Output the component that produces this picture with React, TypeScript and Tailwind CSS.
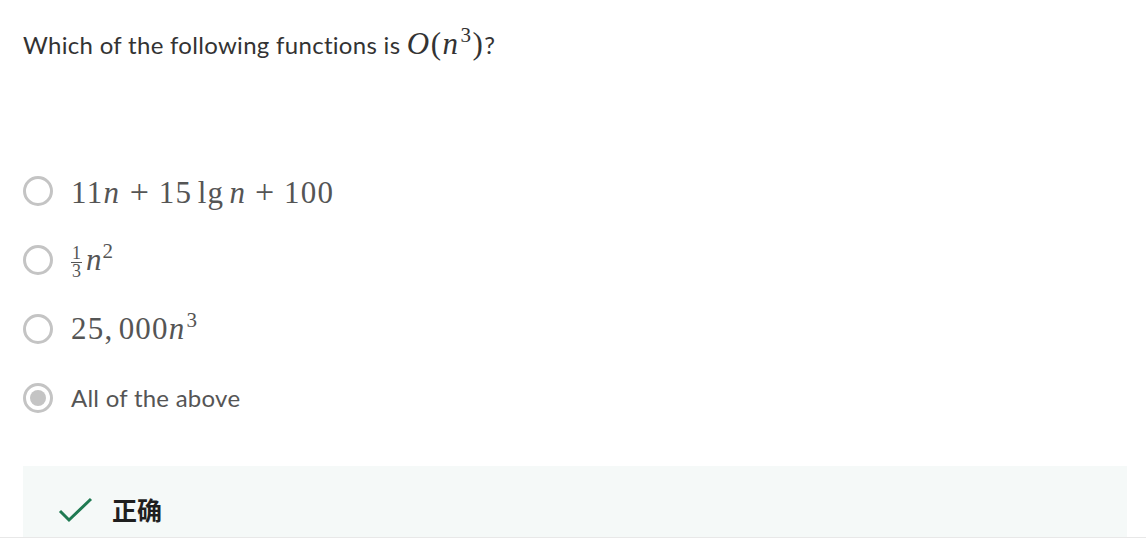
import React from "react";

const serif = "font-['Liberation_Serif','DejaVu_Serif',serif]";

function Radio({ selected }: { selected?: boolean }) {
  return (
    <div className="w-[30px] h-[30px] rounded-full border-[3px] border-[#c4c4c4] flex items-center justify-center shrink-0">
      {selected && <div className="w-[16px] h-[16px] rounded-full bg-[#c4c4c4]" />}
    </div>
  );
}

function Option({ selected, children }: { selected?: boolean; children: React.ReactNode }) {
  return (
    <div className="flex items-center gap-[18px] h-[40px]">
      <Radio selected={selected} />
      <div className="text-[#555]">{children}</div>
    </div>
  );
}

function Plus() {
  return <span className="mx-[0.25em] text-[34px]">+</span>;
}

function Sup({ children, top = "top-[-12px]" }: { children: React.ReactNode; top?: string }) {
  return <span className={`inline-block text-[21px] leading-none relative ${top} ml-[1px]`}>{children}</span>;
}

export default function App() {
  return (
    <div className="w-[1146px] h-[550px] bg-white relative overflow-hidden font-['Lato','Noto_Sans',sans-serif]">
      <div className="px-[23px] pt-[21px]">
        <div className="flex items-baseline text-[24px] tracking-[0.3px] text-[#333] h-[44px]">
          <span>Which of the following functions is&nbsp;</span>
          <span className={`${serif} text-[31px] text-[#333] tracking-[1.5px]`}>
            <i>O</i>(<i>n</i>
            <Sup>3</Sup>)
          </span>
          <span>?</span>
        </div>
      </div>
      <div className="px-[23px] mt-[106px] flex flex-col gap-[29px]">
        <Option>
          <span className={`${serif} text-[31px] whitespace-nowrap tracking-[1.3px] flex items-baseline`}>
            11<i className="mr-[1px]">n</i>
            <Plus />
            15<span className="ml-[0.17em] mr-[0.17em]">lg</span>
            <i>n</i>
            <Plus />
            100
          </span>
        </Option>
        <Option>
          <span className={`${serif} text-[31px] flex items-center`}>
            <span className="inline-flex flex-col items-center text-[18px] leading-[15px] mr-[4px] mt-[4px]">
              <span>1</span>
              <span className="w-[11px] h-[1px] bg-[#555] my-[1px]" />
              <span>3</span>
            </span>
            <i>n</i>
            <Sup top="top-[-9px]">2</Sup>
          </span>
        </Option>
        <Option>
          <span className={`${serif} text-[31px] tracking-[1.2px]`}>
            25,<span className="ml-[0.17em]">000</span>
            <i>n</i>
            <Sup>3</Sup>
          </span>
        </Option>
        <Option selected>
          <span className="text-[24px] tracking-[0.25px]">All of the above</span>
        </Option>
      </div>
      <div className="ml-[23px] mr-[19px] mt-[48px] h-[71px] bg-[#f5f9f8] flex items-center pl-[35px] pt-[16px]">
        <svg width="36" height="28" viewBox="0 0 36 28" className="shrink-0">
          <path d="M2 15 L11 24 L33 3" fill="none" stroke="#1f7a52" strokeWidth="3" />
        </svg>
        <span className="ml-[18px] text-[25px] font-bold text-[#1f1f1f] font-['Noto_Sans_CJK_SC',sans-serif]">正确</span>
      </div>
      <div className="h-[1px] bg-[#e8e8e8]" />
    </div>
  );
}
